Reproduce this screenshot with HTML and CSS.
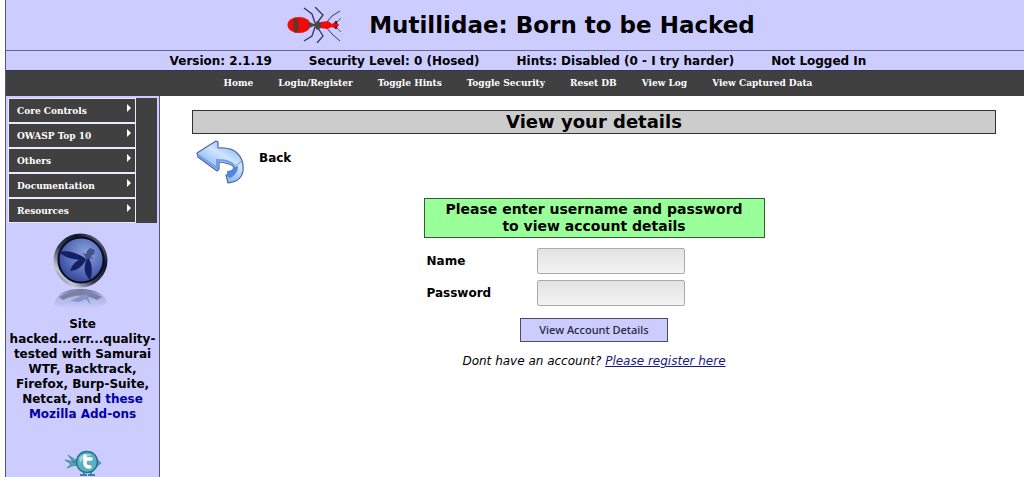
FILE: index.html
```html
<!DOCTYPE html>
<html lang="en">
<head>
<meta charset="utf-8">
<title>Mutillidae: Born to be Hacked</title>
<link rel="stylesheet" href="styles.css">
</head>
<body>
<div class="page">
  <header class="banner">
    <svg class="ant" viewBox="0 0 54 36" aria-hidden="true">
      <g fill="none" stroke="#34345f" stroke-width="1.300">
        <path d="M17 1L25 7 28 16M28 0L36 8 30 16M17 34L25 29 28 20M30 36L36 29 31 21"/>
        <path d="M53 4L45 9 39 16M53 34L45 27 39 20" stroke-width="1"/>
        <path d="M49 16L54 11M49 20L54 25" stroke="#84507f" stroke-width="1"/>
      </g>
      <ellipse cx="12" cy="18" rx="11.500" ry="8" fill="#f40808"/>
      <path d="M8 11Q12 11 12 18 12 24 9 26 6 25 6 18 6 12 8 11Z" fill="#673629"/>
      <path d="M22 15L27 17 30 14 36 16V20L30 23 27 19 22 21Z" fill="#4a484c"/>
      <path d="M34 15L41 14 45 17 49 14 52 18 49 22 45 20 40 22 34 21Z" fill="#f40808"/>
      <path d="M48 14h2v3h-2zM48 19h2v3h-2z" fill="#402030"/>
    </svg>
    <h1>Mutillidae: Born to be Hacked</h1>
  </header>
  <div class="status">
    <span>Version: 2.1.19</span><span>Security Level: 0 (Hosed)</span><span>Hints: Disabled (0 - I try harder)</span><span>Not Logged In</span>
  </div>
  <nav class="topnav">
    <a href="#">Home</a><a href="#">Login/Register</a><a href="#">Toggle Hints</a><a href="#">Toggle Security</a><a href="#">Reset DB</a><a href="#">View Log</a><a href="#">View Captured Data</a>
  </nav>
  <div class="columns">
    <aside class="sidebar">
      <nav class="menu">
        <a href="#">Core Controls</a>
        <a href="#">OWASP Top 10</a>
        <a href="#">Others</a>
        <a href="#">Documentation</a>
        <a href="#">Resources</a>
      </nav>
      <a class="owasp" href="#" aria-label="OWASP">
        <svg viewBox="0 0 56 78">
          <defs>
            <linearGradient id="rim" x1="0" y1="1" x2="1" y2="0"><stop offset="0" stop-color="#111525"/><stop offset=".2" stop-color="#c5c8da"/><stop offset=".42" stop-color="#33384a"/><stop offset=".7" stop-color="#11162a"/><stop offset="1" stop-color="#9094a8"/></linearGradient>
            <radialGradient id="glass" cx=".6" cy=".35" r=".7"><stop offset="0" stop-color="#8ba2dc"/><stop offset=".55" stop-color="#5a71bc"/><stop offset="1" stop-color="#304294"/></radialGradient>
            <linearGradient id="mirror" x1="0" y1="0" x2="0" y2="1"><stop offset="0" stop-color="#6e7594"/><stop offset=".35" stop-color="#a9b2dc"/><stop offset="1" stop-color="#ccccff"/></linearGradient>
          </defs>
          <path d="M1 72C3 60 14 56 28 56S52 61 54 70Q43 77 27 76T1 72Z" fill="url(#mirror)"/>
          <path d="M6 64Q27 52 49 64L44 67Q27 58 10 67Z" fill="#7981a6"/>
          <path d="M17 68L28 63 34 61 38 72 33 66 26 69Z" fill="#8895c9"/>
          <circle cx="27.500" cy="27.500" r="27" fill="url(#rim)"/>
          <circle cx="28" cy="27" r="22.500" fill="url(#glass)" stroke="#080d25" stroke-width="2"/>
          <g fill="#142063">
            <path d="M32 25Q18 16 6 19 14 27 31 27Z"/>
            <path d="M32 25Q20 27 17 38 27 38 33 27Z"/>
            <path d="M34 25Q28 38 37 47 41 36 36 25Z"/>
          </g>
          <path d="M29 20L33 21 34 18 37 15 42 17 41 21 38 23 40 26 36 25 33 27 32 23Z" fill="#41548d"/>
        </svg>
      </a>
      <p class="tested">Site hacked...err...quality-tested with Samurai WTF, Backtrack, Firefox, Burp-Suite, Netcat, and <a href="#">these Mozilla Add-ons</a></p>
      <a class="bird" href="#" aria-label="Twitter">
        <svg viewBox="0 0 36 27">
          <path d="M0 10L10 12 13 15 7 16 2 18 6 14ZM3 5L12 11 9 13ZM31 9L36 13 31 17Z" fill="#5aa2ae" stroke="#317c91" stroke-width=".7"/>
          <circle cx="22" cy="12" r="10.500" fill="#58b2c1" stroke="#267389" stroke-width="1.500"/>
          <path d="M14 8Q19 2 27 5 20 6 15 13Z" fill="#9bd6de"/>
          <path d="M20 6V9H26M20 9V13Q20 17 25 17" fill="none" stroke="#fff" stroke-width="3.500" stroke-linecap="round"/>
          <path d="M19 22V26M26 22V26M15 25H22M23 25H30" fill="none" stroke="#39869a" stroke-width="2"/>
        </svg>
      </a>
    </aside>
    <main class="content">
      <h2>View your details</h2>
      <a class="back" href="#">
        <svg viewBox="0 0 48 44" aria-hidden="true">
          <defs><linearGradient id="arrow" x1="0" y1="1" x2=".7" y2="0"><stop offset="0" stop-color="#5b92ea"/><stop offset=".45" stop-color="#9dc3f8"/><stop offset=".7" stop-color="#cfe5ff"/><stop offset="1" stop-color="#8fb6f5"/></linearGradient></defs>
          <path d="M1 13L20 1 22 2V8Q36 7 42 14 48 20 47 31 45 42 32 43L30 35Q37 34 38 27 34 23 23 22V29L21 31 2 17Z" fill="url(#arrow)" stroke="#53699b" stroke-width="1.200" stroke-linejoin="round"/>
          <path d="M2 15L21 28V20Q33 20 38 25" fill="none" stroke="#6f9fec" stroke-width="2"/>
          <path d="M31 31Q36 31 38 27L42 26Q42 34 34 38L31 36Z" fill="#5584dc"/>
          <path d="M38 26Q43 25 46 20" fill="none" stroke="#6d9beb"/>
        </svg>
        <span>Back</span>
      </a>
      <form class="login">
        <p class="prompt">Please enter username and password<br>to view account details</p>
        <div class="fields">
          <label for="name">Name</label><input id="name" type="text">
          <label for="password">Password</label><input id="password" type="password">
        </div>
        <button type="button">View Account Details</button>
        <p class="register">Dont have an account? <a href="#">Please register here</a></p>
      </form>
    </main>
  </div>
</div>
</body>
</html>
```
FILE: styles.css
```css
* { box-sizing: border-box; }
body {
  margin: 0 0 0 5px;
  background: #fff;
  color: #000;
  font: 12px/15px "DejaVu Sans", sans-serif;
}
h1, h2, p { margin: 0; }
svg { display: block; }
.page {
  display: flex;
  flex-direction: column;
  min-height: 100vh;
  border-left: 1px solid #55557a;
}
.banner {
  display: flex;
  justify-content: center;
  align-items: center;
  gap: 28px;
  height: 51px;
  padding-left: 12px;
  background: #ccccff;
  border-bottom: 1px solid #66668a;
}
.ant { width: 54px; height: 36px; }
h1 { font-size: 23px; line-height: 28px; }
.status {
  display: flex;
  justify-content: center;
  gap: 37px;
  padding: 3px 0 1px 6px;
  background: #ccccff;
  border-bottom: 1px solid #333355;
  font-weight: bold;
}
.topnav {
  display: flex;
  justify-content: center;
  gap: 25px;
  padding: 5px 0 6px 6px;
  background: #404040;
}
.topnav a, .menu a {
  color: #fff;
  font: bold 10px/14px "DejaVu Serif Condensed", "DejaVu Serif", serif;
  text-decoration: none;
}
.columns { display: flex; flex: 1; }
.sidebar {
  flex: none;
  width: 154px;
  padding: 2px 2px 0;
  background: #ccccff;
  border-right: 1px solid #55557a;
}
.menu {
  display: grid;
  gap: 2px;
  padding: 1px 22px 1px 1px;
  background: linear-gradient(#404040, #404040) right / 21px 100% no-repeat, #e8e8ff;
}
.menu a {
  display: flex;
  justify-content: space-between;
  padding: 5px 4px 4px 8px;
  background: #404040;
}
.menu a::after {
  content: "";
  width: 4px;
  height: 8px;
  background: #fff;
  clip-path: polygon(0 0, 100% 50%, 0 100%);
}
.owasp { display: block; width: 56px; margin: 10px 0 0 45px; }
.tested {
  margin: 6px -2px 0;
  font-weight: bold;
  text-align: center;
}
.tested a { color: #0000aa; text-decoration: none; }
.bird { display: block; width: 36px; margin: 28px auto 0; }
.content { flex: 1; padding: 14px 28px 0 32px; }
h2 {
  background: #cccccc;
  border: 1px solid #333;
  font-size: 18px;
  line-height: 22px;
  text-align: center;
}
.back {
  display: flex;
  gap: 15px;
  width: max-content;
  padding: 6px 4px 0;
  color: #000;
  font-weight: bold;
  text-decoration: none;
}
.back svg { width: 48px; height: 44px; }
.back span { padding-top: 11px; }
.login {
  display: flex;
  flex-direction: column;
  align-items: center;
  width: 341px;
  margin: 14px auto 0;
}
.prompt {
  width: 100%;
  padding: 2px 0;
  background: #99ff99;
  border: 1px solid #365936;
  font-size: 14px;
  font-weight: bold;
  line-height: 17px;
  text-align: center;
}
.fields {
  display: grid;
  grid-template-columns: 110px 148px;
  gap: 6px 0;
  align-items: center;
  align-self: flex-start;
  padding: 10px 3px;
  font-weight: bold;
}
.fields input {
  width: 100%;
  height: 26px;
  border: 1px solid #aaa;
  border-radius: 2px;
  background: linear-gradient(#e2e2e2, #f3f3f3);
}
.login button {
  height: 24px;
  margin-top: 2px;
  padding: 0 18px;
  background: #ccccff;
  border: 1px solid #4a4a66;
  color: #26263a;
  font: 500 11px/20px "Noto Sans", sans-serif;
}
.register { margin-top: 12px; font-style: italic; }
.register a { color: #191980; }
```
